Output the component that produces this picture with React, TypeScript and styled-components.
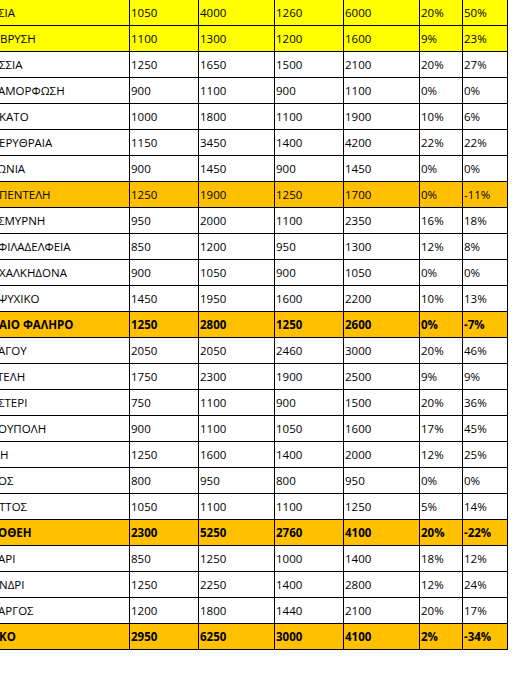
import React from "react";
import styled, { createGlobalStyle } from "styled-components";

const Global = createGlobalStyle`
  html, body { margin: 0; padding: 0; background: #ffffff; }
  body { font-family: "Open Sans", "Noto Sans", "Liberation Sans", sans-serif; }
`;

const Sheet = styled.div`
  display: grid;
  width: fit-content;
  grid-template-columns: 129px 68px 75px 68px 75px 42px 44px;
  grid-auto-rows: 25px;
  gap: 1px;
  padding: 0 1px 1px 0;
  background: #000000;
`;

const Row = styled.div`
  display: contents;
`;

type Tone = "plain" | "yellow" | "orange";

const toneColor: Record<Tone, string> = {
  plain: "#ffffff",
  yellow: "#ffff00",
  orange: "#ffc000",
};

const Cell = styled.div<{ $tone: Tone; $bold: boolean }>`
  background: ${(p) => toneColor[p.$tone]};
  font-size: 11.5px;
  line-height: 25px;
  font-weight: ${(p) => (p.$bold ? 700 : 400)};
  color: #000000;
  padding-left: 1px;
  white-space: nowrap;
  overflow: hidden;
`;

const NameText = styled.span<{ $shift: number }>`
  display: inline-block;
  margin-left: ${(p) => p.$shift}px;
`;

type Item = {
  name: string;
  shift: number;
  values: string[];
  tone: Tone;
  bold?: boolean;
};

const rows: Item[] = [
  { name: "ΣΙΑ", shift: -3, values: ["1050", "4000", "1260", "6000", "20%", "50%"], tone: "yellow" },
  { name: "ΒΡΥΣΗ", shift: -1, values: ["1100", "1300", "1200", "1600", "9%", "23%"], tone: "yellow" },
  { name: "ΣΣΙΑ", shift: -2, values: ["1250", "1650", "1500", "2100", "20%", "27%"], tone: "plain" },
  { name: "ΑΜΟΡΦΩΣΗ", shift: -3, values: ["900", "1100", "900", "1100", "0%", "0%"], tone: "plain" },
  { name: "ΚΑΤΟ", shift: -2, values: ["1000", "1800", "1100", "1900", "10%", "6%"], tone: "plain" },
  { name: "ΕΡΥΘΡΑΙΑ", shift: -2, values: ["1150", "3450", "1400", "4200", "22%", "22%"], tone: "plain" },
  { name: "ΩΝΙΑ", shift: -4, values: ["900", "1450", "900", "1450", "0%", "0%"], tone: "plain" },
  { name: "ΠΕΝΤΕΛΗ", shift: -2, values: ["1250", "1900", "1250", "1700", "0%", "-11%"], tone: "orange" },
  { name: "ΣΜΥΡΝΗ", shift: -3, values: ["950", "2000", "1100", "2350", "16%", "18%"], tone: "plain" },
  { name: "ΦΙΛΑΔΕΛΦΕΙΑ", shift: -3, values: ["850", "1200", "950", "1300", "12%", "8%"], tone: "plain" },
  { name: "ΧΑΛΚΗΔΟΝΑ", shift: -2, values: ["900", "1050", "900", "1050", "0%", "0%"], tone: "plain" },
  { name: "ΨΥΧΙΚΟ", shift: -3, values: ["1450", "1950", "1600", "2200", "10%", "13%"], tone: "plain" },
  { name: "ΑΙΟ ΦΑΛΗΡΟ", shift: -2, values: ["1250", "2800", "1250", "2600", "0%", "-7%"], tone: "orange", bold: true },
  { name: "ΑΓΟΥ", shift: -3, values: ["2050", "2050", "2460", "3000", "20%", "46%"], tone: "plain" },
  { name: "ΤΕΛΗ", shift: -4, values: ["1750", "2300", "1900", "2500", "9%", "9%"], tone: "plain" },
  { name: "ΣΤΕΡΙ", shift: -3, values: ["750", "1100", "900", "1500", "20%", "36%"], tone: "plain" },
  { name: "ΟΥΠΟΛΗ", shift: -3, values: ["900", "1100", "1050", "1600", "17%", "45%"], tone: "plain" },
  { name: "Η", shift: -1, values: ["1250", "1600", "1400", "2000", "12%", "25%"], tone: "plain" },
  { name: "ΟΣ", shift: -3, values: ["800", "950", "800", "950", "0%", "0%"], tone: "plain" },
  { name: "ΤΤΟΣ", shift: -2, values: ["1050", "1100", "1100", "1250", "5%", "14%"], tone: "plain" },
  { name: "ΟΘΕΗ", shift: -3, values: ["2300", "5250", "2760", "4100", "20%", "-22%"], tone: "orange", bold: true },
  { name: "ΑΡΙ", shift: -3, values: ["850", "1250", "1000", "1400", "18%", "12%"], tone: "plain" },
  { name: "ΝΔΡΙ", shift: -2, values: ["1250", "2250", "1400", "2800", "12%", "24%"], tone: "plain" },
  { name: "ΑΡΓΟΣ", shift: -3, values: ["1200", "1800", "1440", "2100", "20%", "17%"], tone: "plain" },
  { name: "ΚΟ", shift: -2, values: ["2950", "6250", "3000", "4100", "2%", "-34%"], tone: "orange", bold: true },
];

export default function App() {
  return (
    <>
      <Global />
      <Sheet>
        {rows.map((r, i) => (
          <Row key={i}>
            <Cell $tone={r.tone} $bold={!!r.bold}>
              <NameText $shift={r.shift}>{r.name}</NameText>
            </Cell>
            {r.values.map((v, j) => (
              <Cell key={j} $tone={r.tone} $bold={!!r.bold}>
                {v}
              </Cell>
            ))}
          </Row>
        ))}
      </Sheet>
    </>
  );
}
